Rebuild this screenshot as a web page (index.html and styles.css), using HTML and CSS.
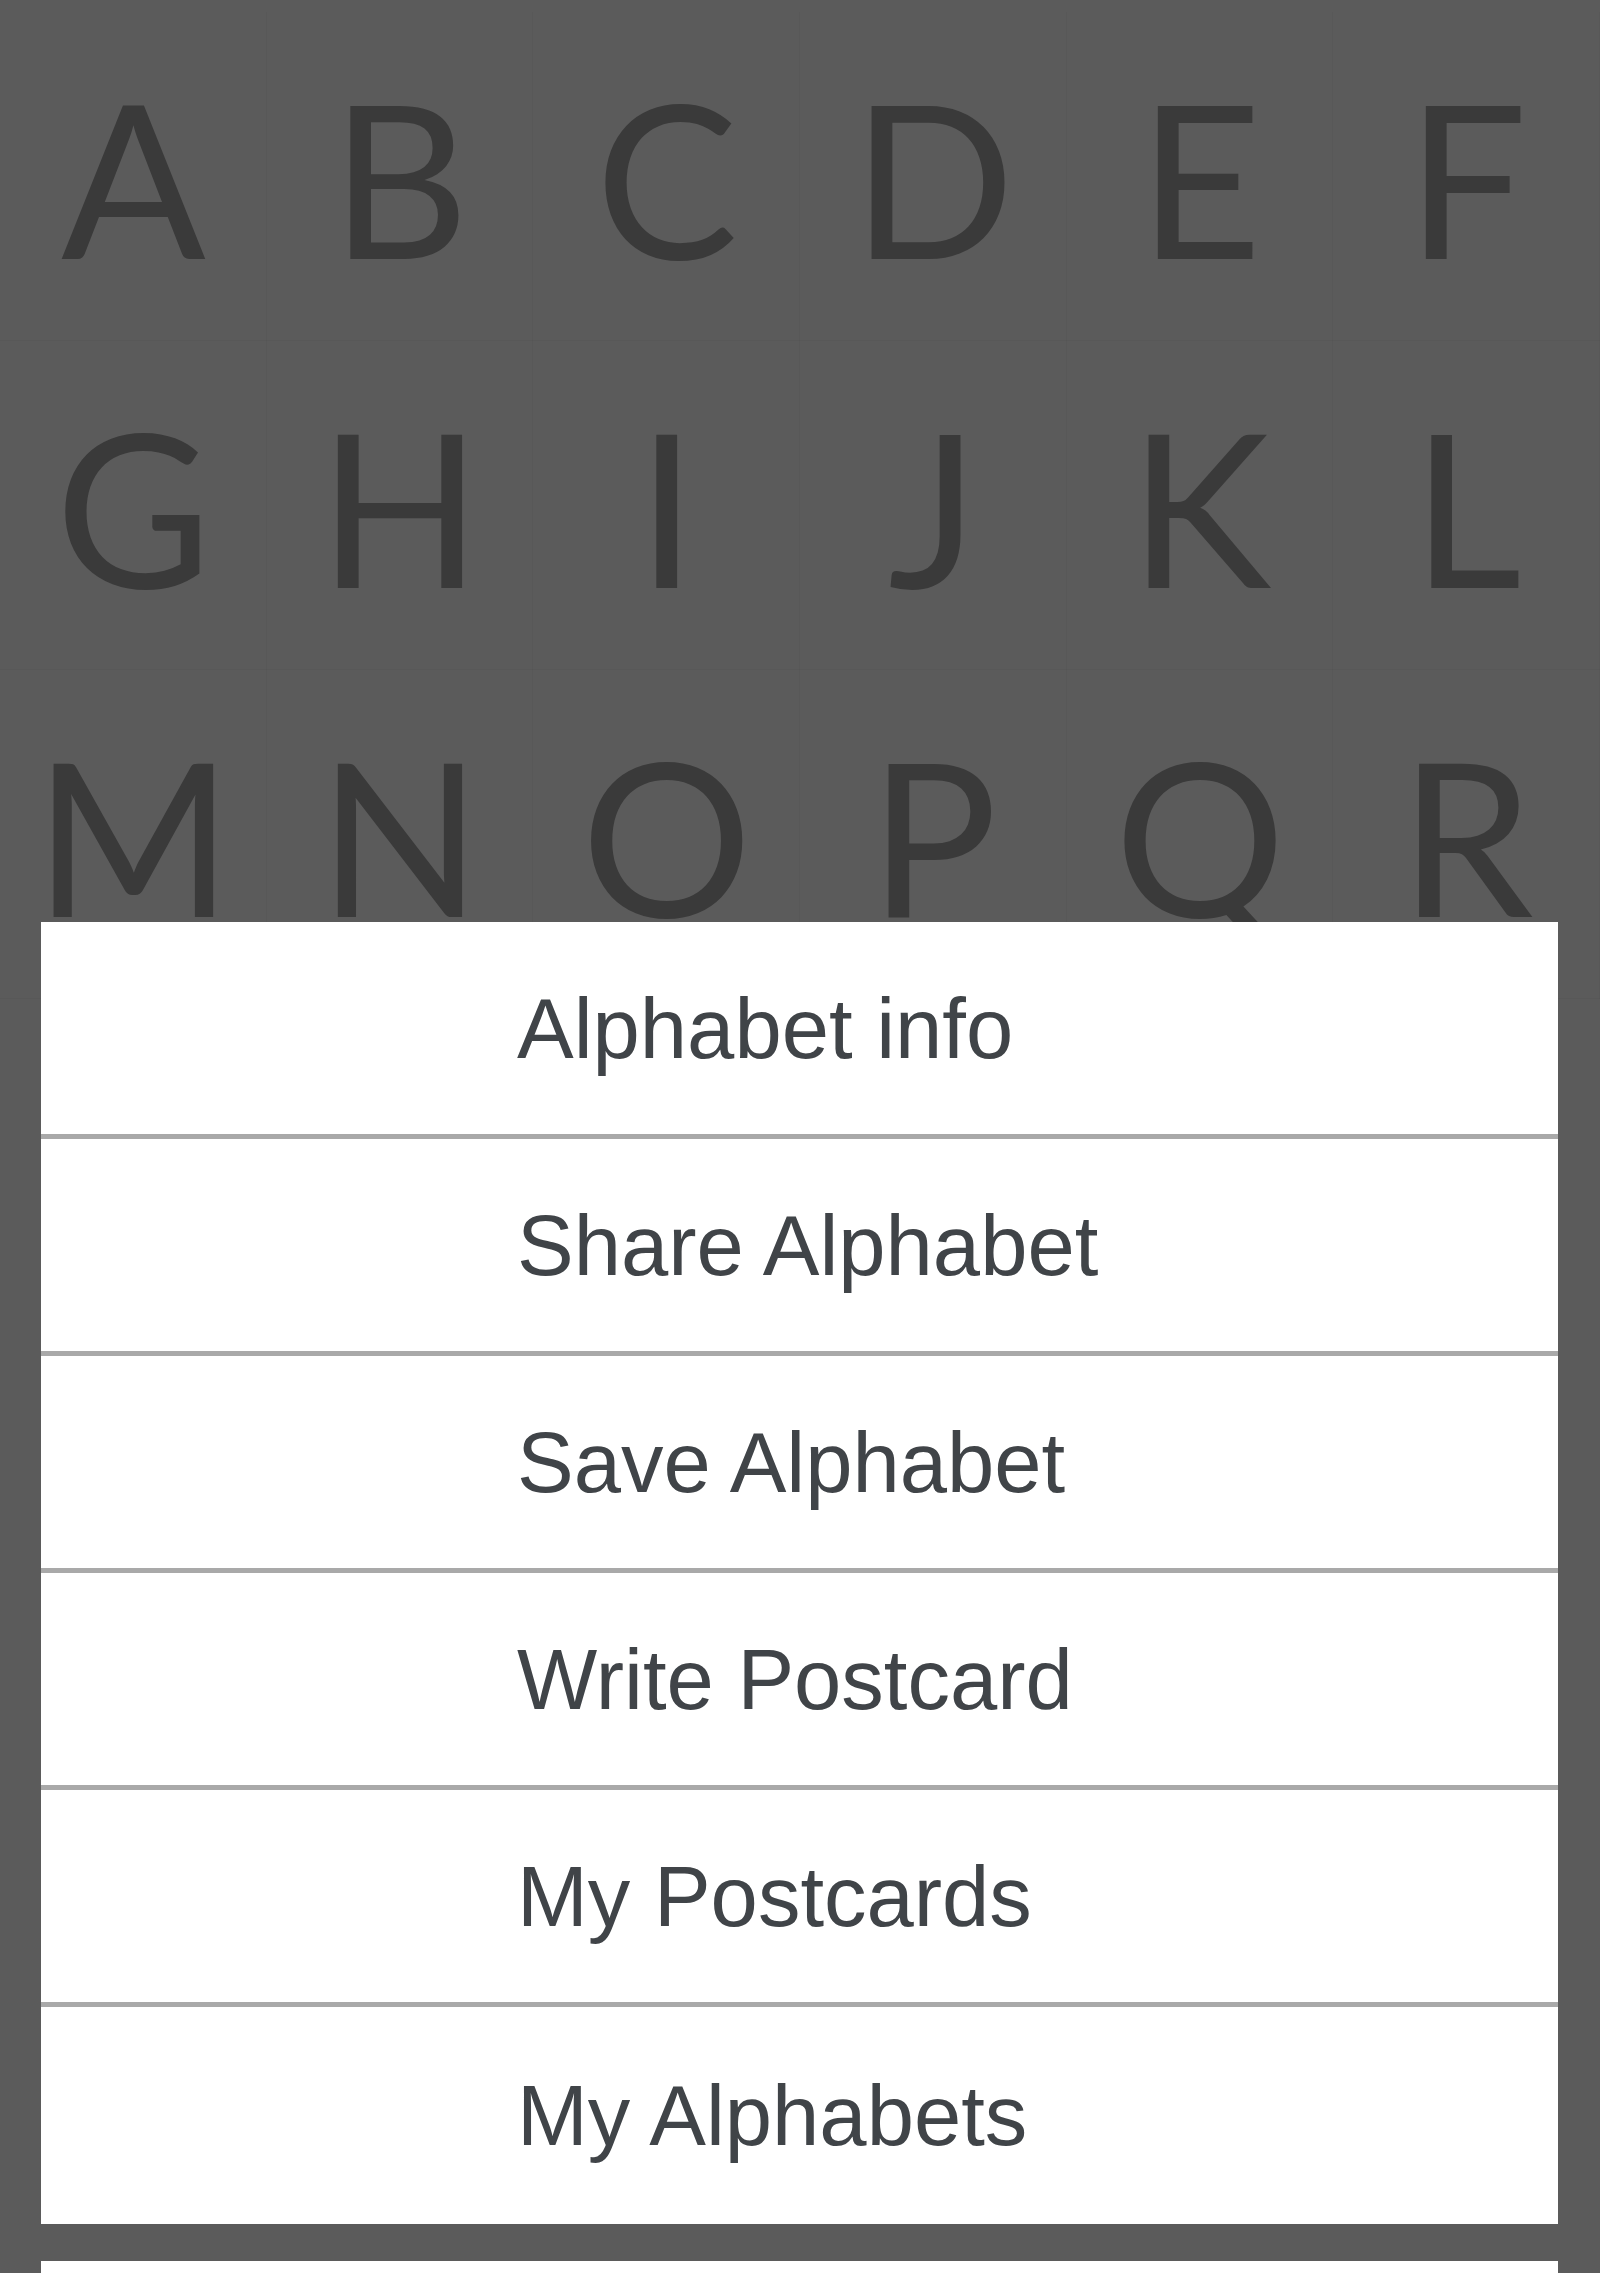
FILE: index.html
```html
<!DOCTYPE html>
<html lang="en">
<head>
<meta charset="utf-8">
<title>Alphabet</title>
<link rel="stylesheet" href="styles.css">
</head>
<body>
<div class="screen">
  <div class="letters">
    <div class="cell">A</div><div class="cell">B</div><div class="cell">C</div><div class="cell">D</div><div class="cell">E</div><div class="cell">F</div>
    <div class="cell">G</div><div class="cell">H</div><div class="cell">I</div><div class="cell">J</div><div class="cell">K</div><div class="cell">L</div>
    <div class="cell">M</div><div class="cell">N</div><div class="cell">O</div><div class="cell">P</div><div class="cell">Q</div><div class="cell">R</div>
  </div>
  <div class="sheet">
    <div class="group">
      <div class="item">Alphabet info</div>
      <div class="item">Share Alphabet</div>
      <div class="item">Save Alphabet</div>
      <div class="item">Write Postcard</div>
      <div class="item">My Postcards</div>
      <div class="item">My Alphabets</div>
    </div>
    <div class="group cancel"></div>
  </div>
</div>
</body>
</html>
```
FILE: styles.css
```css
html, body {
  margin: 0;
  padding: 0;
}
body {
  background: #5b5b5b;
  width: 1600px;
  height: 2273px;
  overflow: hidden;
}
.screen {
  position: relative;
  width: 1600px;
  height: 2273px;
  background: #5b5b5b;
  overflow: hidden;
}
.letters {
  display: grid;
  grid-template-columns: repeat(6, 1fr);
  grid-auto-rows: 329px;
  padding-top: 12px;
}
.cell {
  display: flex;
  align-items: center;
  justify-content: center;
  font-family: Lato, "Open Sans", sans-serif;
  font-size: 214px;
  line-height: 1;
  color: #3a3a3a;
  box-shadow: inset -1px 0 0 rgba(0,0,0,0.025), inset 0 -1px 0 rgba(0,0,0,0.03);
}
.sheet {
  position: absolute;
  top: 922px;
  left: 41px;
  width: 1517px;
  display: flex;
  flex-direction: column;
  gap: 37px;
}
.group {
  background: #ffffff;
  display: flex;
  flex-direction: column;
}
.item {
  box-sizing: border-box;
  height: 217px;
  display: flex;
  align-items: center;
  padding-left: 476px;
  font-family: "Liberation Sans", Arial, sans-serif;
  font-size: 85px;
  line-height: 1;
  color: #404448;
  border-bottom: 5px solid #a9a9a9;
}
.item:last-child {
  border-bottom: none;
}
.cancel {
  height: 12px;
}
```
